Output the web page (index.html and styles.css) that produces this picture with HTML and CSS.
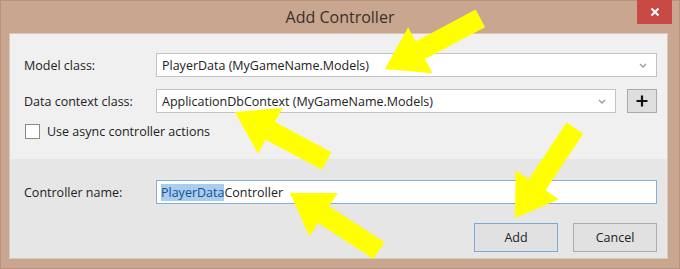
FILE: index.html
```html
<!DOCTYPE html>
<html>
<head>
<meta charset="utf-8">
<link rel="stylesheet" href="styles.css">
</head>
<body>
<div class="window">
  <div class="titlebar">
    <div></div>
    <div class="title">Add Controller</div>
    <div class="close"><svg width="10" height="10" viewBox="0 0 10 10"><path d="M1.5 1.5 L8.5 8.5 M8.5 1.5 L1.5 8.5" stroke="#fff" stroke-width="2"/></svg></div>
  </div>
  <div class="content">
    <div class="upper">
      <div class="row">
        <label class="lbl">Model class:</label>
        <div class="select wide"><span>PlayerData (MyGameName.Models)</span><svg class="chev" width="8" height="5" viewBox="0 0 8 5"><path d="M1 1 L4 4 L7 1" stroke="#9a9a9a" stroke-width="1.3" fill="none"/></svg></div>
      </div>
      <div class="row">
        <label class="lbl">Data context class:</label>
        <div class="select mid"><span>ApplicationDbContext (MyGameName.Models)</span><svg class="chev" width="8" height="5" viewBox="0 0 8 5"><path d="M1 1 L4 4 L7 1" stroke="#9a9a9a" stroke-width="1.3" fill="none"/></svg></div>
        <div class="plus"><svg width="12" height="12" viewBox="0 0 12 12"><path d="M6 0.5 V11.5 M0.5 6 H11.5" stroke="#111" stroke-width="2.2"/></svg></div>
      </div>
      <div class="check-row">
        <span class="box"></span>
        <span class="check-text">Use async controller actions</span>
      </div>
    </div>
    <div class="lower">
      <div class="row">
        <label class="lbl">Controller name:</label>
        <div class="textbox"><span class="sel">PlayerData</span>Controller</div>
      </div>
      <div class="buttons">
        <div class="btn default">Add</div>
        <div class="btn">Cancel</div>
      </div>
    </div>
  </div>
  <svg class="arrows" width="680" height="269" viewBox="0 0 680 269">
    <g fill="#ffff00">
      <polygon transform="translate(385,69) rotate(-28)" points="0,0 40,-26 40,-10 108,-10 108,10 40,10 40,26"/>
      <polygon transform="translate(235,112) rotate(28.1)" points="0,0 40,-26 40,-10 104,-10 104,10 40,10 40,26"/>
      <polygon transform="translate(515,218) rotate(-56.3)" points="0,0 40,-26 40,-10 108,-10 108,10 40,10 40,26"/>
      <polygon transform="translate(290,193) rotate(32.9)" points="0,0 40,-26 40,-10 106,-10 106,10 40,10 40,26"/>
    </g>
  </svg>
</div>
</body>
</html>
```
FILE: styles.css
```css
html, body {
  margin: 0;
  padding: 0;
}
body {
  width: 680px;
  height: 269px;
  overflow: hidden;
  font-family: "Open Sans", "Noto Sans", sans-serif;
  font-size: 12.5px;
  color: #222;
}
.window {
  position: relative;
  width: 680px;
  height: 269px;
  background: #c9a68f;
  display: flex;
  flex-direction: column;
  box-sizing: border-box;
  border: 1px solid #b89279;
}
.titlebar {
  height: 32px;
  display: grid;
  grid-template-columns: 1fr auto 1fr;
  align-items: start;
}
.title {
  font-size: 16px;
  color: #3a302b;
  padding-top: 5px;
}
.close {
  justify-self: end;
  margin-right: 7px;
  margin-top: -1px;
  width: 35px;
  height: 24px;
  background: #c94a45;
  display: flex;
  align-items: center;
  justify-content: center;
}
.content {
  margin: 0 11px 0 8px;
  height: 226px;
  display: flex;
  flex-direction: column;
  border: 1px solid #ddc8b8;
  box-sizing: border-box;
}
.upper {
  background: #f0f0f0;
  height: 125px;
  box-sizing: border-box;
  padding: 19px 10px 0 14px;
  display: flex;
  flex-direction: column;
  gap: 12px;
}
.lower {
  background: #e6e6e6;
  flex: 1;
  box-sizing: border-box;
  padding: 21px 10px 0 14px;
  display: flex;
  flex-direction: column;
  gap: 19px;
}
.row {
  display: flex;
  align-items: center;
  height: 24px;
}
.lbl {
  width: 132px;
  flex: none;
  color: #222;
}
.select {
  height: 24px;
  box-sizing: border-box;
  background: #fff;
  border: 1px solid #c3c3c3;
  display: flex;
  align-items: center;
  justify-content: space-between;
  padding: 0 9px 0 5px;
}
.wide {
  width: 502px;
}
.mid {
  width: 461px;
}
.plus {
  margin-left: 11px;
  width: 30px;
  height: 24px;
  box-sizing: border-box;
  background: #dedede;
  border: 1px solid #a9a9a9;
  display: flex;
  align-items: center;
  justify-content: center;
}
.check-row {
  display: flex;
  align-items: center;
  gap: 7px;
  margin-top: -2px;
  padding-left: 1px;
}
.box {
  width: 15px;
  height: 15px;
  box-sizing: border-box;
  background: #fff;
  border: 1px solid #8a8a8a;
}
.textbox {
  width: 502px;
  height: 24px;
  box-sizing: border-box;
  background: #fff;
  border: 1px solid #86aedb;
  display: flex;
  align-items: center;
  padding-left: 4px;
}
.sel {
  background: #a8cdf0;
  color: #1a4f8f;
}
.buttons {
  display: flex;
  justify-content: flex-end;
  gap: 15px;
}
.btn {
  width: 84px;
  height: 29px;
  box-sizing: border-box;
  background: #e1e1e1;
  border: 1px solid #adadad;
  display: flex;
  align-items: center;
  justify-content: center;
  color: #222;
}
.btn.default {
  border-color: #7aa9d8;
}
.arrows {
  position: absolute;
  left: -1px;
  top: -1px;
  pointer-events: none;
}
```
